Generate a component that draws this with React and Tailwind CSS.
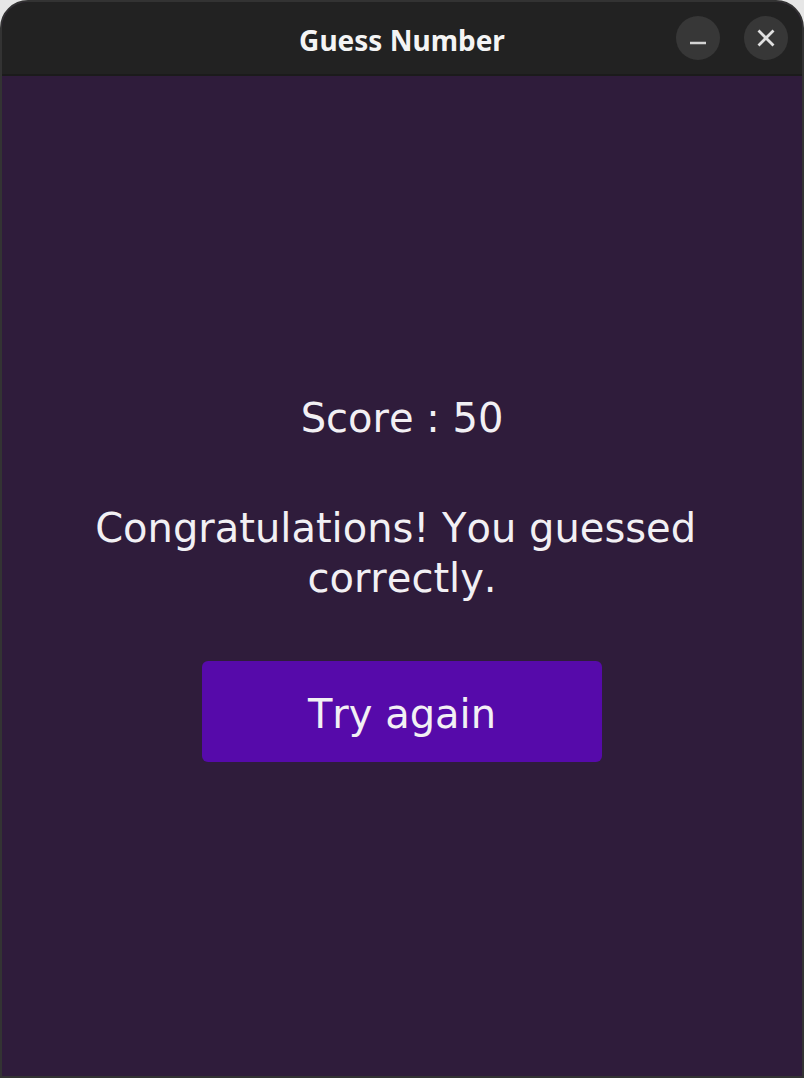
function TitleBar() {
  return (
    <header className="grid h-[74px] shrink-0 grid-cols-[1fr_auto_1fr] items-center border-b-2 border-[#1b1b1b] bg-[#222222] px-3.5">
      <h1 className="col-start-2 pt-1 font-['Noto_Sans',sans-serif] text-[28px] leading-9 font-bold text-[#f4f4f4]">
        Guess Number
      </h1>
      <div className="flex justify-end gap-6">
        <button
          type="button"
          aria-label="Minimize"
          className="flex size-11 items-center justify-center rounded-full bg-[#373737]"
        >
          <svg viewBox="0 0 44 44" className="size-11" aria-hidden="true">
            <path d="M14 27h16" stroke="#d4d4d4" strokeWidth="2.5" />
          </svg>
        </button>
        <button
          type="button"
          aria-label="Close"
          className="flex size-11 items-center justify-center rounded-full bg-[#373737]"
        >
          <svg viewBox="0 0 44 44" className="size-11" aria-hidden="true">
            <path d="M14.5 14.5l15 15M29.5 14.5l-15 15" stroke="#e0e0e0" strokeWidth="2.8" />
          </svg>
        </button>
      </div>
    </header>
  );
}

export default function App() {
  return (
    <div className="flex min-h-screen bg-linear-to-b from-[#e6e6e6] from-0% via-[#e6e6e6] via-5% to-[#2f2f2f] to-10%">
      <div className="flex grow flex-col overflow-hidden rounded-t-[28px] border-2 border-[#333333] bg-[#2f1c3b]">
        <TitleBar />
        <main className="flex grow flex-col items-center justify-center px-4 pt-0.5 text-center font-['DejaVu_Sans',sans-serif] text-[40px] leading-[50px] text-[#f2f0f4] [font-kerning:none]">
          <p>Score : 50</p>
          <p className="mt-[60px] mb-[58px]">
            Congratulations! You guessed&nbsp;
            <br />
            correctly.
          </p>
          <button
            type="button"
            className="h-[101px] w-full max-w-[400px] rounded-md bg-[#560aaa] pt-1.5 [font-kerning:none]"
          >
            Try again
          </button>
        </main>
      </div>
    </div>
  );
}
